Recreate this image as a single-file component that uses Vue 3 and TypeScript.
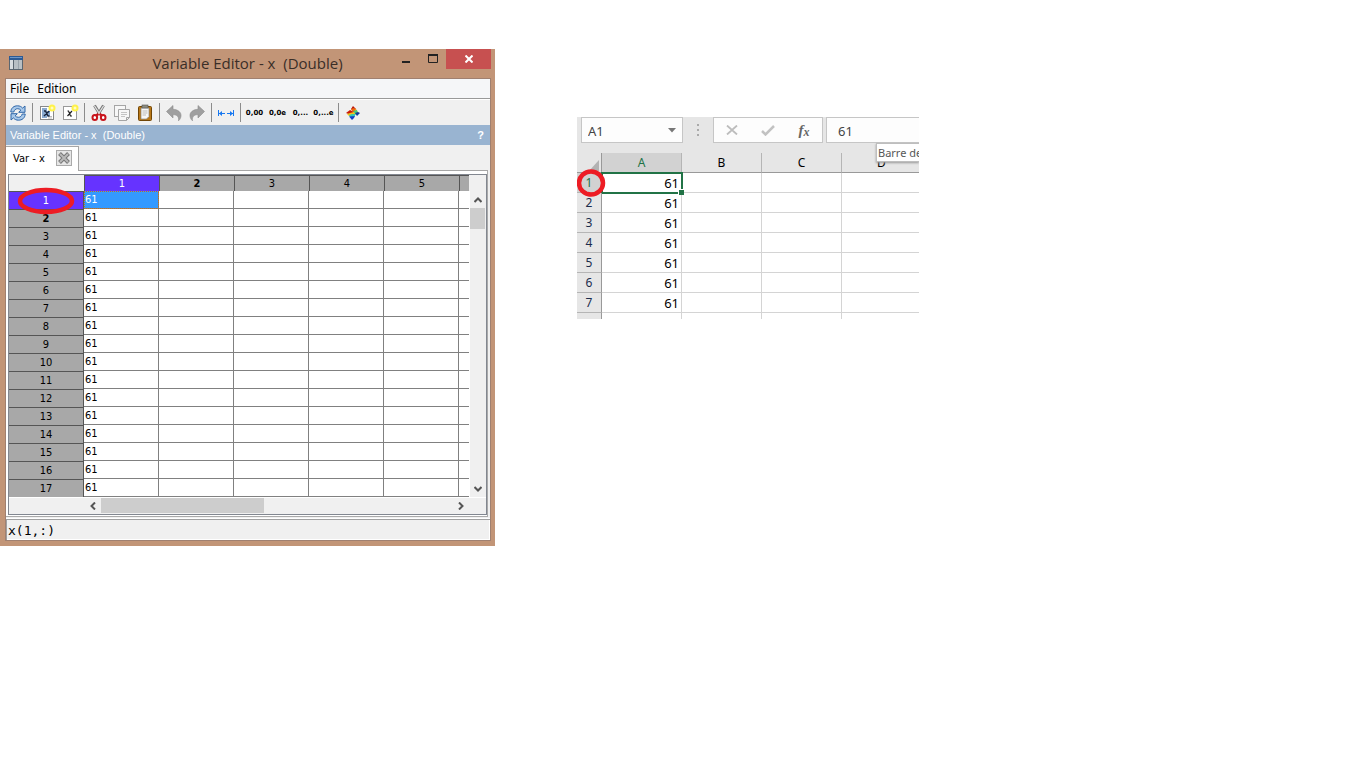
<script setup lang="ts">
import { ref } from 'vue'

const title = 'Variable Editor - x  (Double)'
const editorColumns: number[] = [1, 2, 3, 4, 5, 6]
const editorRows: number[] = Array.from({ length: 17 }, (_, i) => i + 1)
const sheetColumns: string[] = ['A', 'B', 'C', 'D']
const sheetRows: number[] = [1, 2, 3, 4, 5, 6, 7]
const formats: string[] = ['0,00', '0,0e', '0,...', '0,...e']

const value = 61
const selection = ref('x(1,:)')
const cellName = ref('A1')
const formula = ref('61')
</script>

<template>
  <main class="desk">
    <section class="window">
      <header class="titlebar">
        <svg class="app-icon" width="14" height="14" viewBox="0 0 14 14">
          <rect width="14" height="14" fill="#5b6670" />
          <rect width="14" height="4" fill="#2c5a94" />
          <rect x="1" y="1" width="12" height="1" fill="#6d96c8" />
          <rect x="1" y="4" width="3" height="9" fill="#d8dcdf" />
          <rect x="5" y="4" width="8" height="9" fill="#b8bfc4" />
          <rect x="9" y="4" width="1" height="9" fill="#9aa3aa" />
        </svg>
        <h1 class="title">{{ title }}</h1>
        <div class="controls">
          <button class="ctl" aria-label="Minimize">
            <svg width="10" height="10" viewBox="0 0 10 10"><path d="M1 8h8" stroke="#222" stroke-width="2" /></svg>
          </button>
          <button class="ctl" aria-label="Maximize">
            <svg width="10" height="10" viewBox="0 0 10 10"><path d="M.5 1v7.500h9V1" fill="none" stroke="#222" /><path d="M0 1h10" stroke="#222" stroke-width="2" /></svg>
          </button>
          <button class="ctl close" aria-label="Close">
            <svg width="8" height="8" viewBox="0 0 8 8"><path d="M.5 .5l7 7M7.500 .5l-7 7" stroke="#fff" stroke-width="2" /></svg>
          </button>
        </div>
      </header>

      <div class="client">
        <nav class="menubar">
          <button>File</button>
          <button>Edition</button>
        </nav>

        <div class="toolbar">
          <button class="tool" aria-label="Refresh">
            <svg width="16" height="16" viewBox="0 0 16 16" stroke="#2f66a8" stroke-width="1">
              <path d="M.8 7C1 2.800 4 .8 7.500 .8c2.300 0 3.900.9 5.100 2.300L15 1v6.300H8.700l2.100-2.200C10 4.300 9 3.700 7.700 3.700 5.600 3.700 4.200 5 3.800 7z" fill="#a9c9ea" />
              <path d="M15.200 9c-.2 4.200-3.200 6.200-6.700 6.200-2.300 0-3.900-.9-5.100-2.300L1 15V8.700h6.300l-2.100 2.200c.8.8 1.800 1.400 3.100 1.400 2.100 0 3.500-1.300 3.900-3.300z" fill="#a9c9ea" />
            </svg>
          </button>
          <span class="sep"></span>
          <button class="tool" aria-label="New variable from selection">
            <svg width="18" height="18" viewBox="0 0 18 18">
              <rect x="2.500" y="2.500" width="13" height="13" fill="#fff" stroke="#888" />
              <path d="M4 4h5v3h3v5H9v2H4z" fill="#89a9cf" />
              <path d="M11 12.500h3M10 14h4" stroke="#bbb" />
              <path d="M6 7h1.500l2.500 5h1.500M11.300 7L6 12" fill="none" stroke="#17233a" stroke-width="1.300" />
              <circle cx="14" cy="4" r="3.500" fill="#fff24a" /><circle cx="14" cy="4" r="1.500" fill="#fffcc0" />
            </svg>
          </button>
          <button class="tool" aria-label="New variable">
            <svg width="18" height="18" viewBox="0 0 18 18">
              <rect x="2.500" y="2.500" width="13" height="13" fill="#fff" stroke="#999" />
              <path d="M6.500 7h1l2 5h1.500M11 7L6.500 12" fill="none" stroke="#222" stroke-width="1.200" />
              <circle cx="14" cy="4" r="3.500" fill="#fff24a" /><circle cx="14" cy="4" r="1.500" fill="#fffcc0" />
            </svg>
          </button>
          <span class="sep"></span>
          <button class="tool" aria-label="Cut">
            <svg width="18" height="18" viewBox="0 0 18 18">
              <path d="M4.500 1.500L10 10.500M13.500 1.500L8 10.500" stroke="#777" stroke-width="3" />
              <path d="M4.500 2L10 10.500M13.500 2L8 10.500" stroke="#e2e2e2" stroke-width="1.300" />
              <path d="M8.500 10L6 11.500M9.500 10L12 11.500" stroke="#c8141c" stroke-width="2.500" />
              <ellipse cx="4.800" cy="13.500" rx="2.300" ry="2.500" fill="#fff" stroke="#c8141c" stroke-width="2" />
              <ellipse cx="13.200" cy="13.500" rx="2.300" ry="2.500" fill="#fff" stroke="#c8141c" stroke-width="2" />
            </svg>
          </button>
          <button class="tool" aria-label="Copy">
            <svg width="18" height="18" viewBox="0 0 18 18" fill="#f7f7f7" stroke="#a5a5a5">
              <rect x="1.500" y="1.500" width="11" height="11" />
              <path d="M5.500 5.500h11v8l-3 3h-8zM16.500 13.500h-3v3" />
              <path d="M8 8.500h6M8 10.500h6M8 12.500h4" stroke="#c4c4c4" />
            </svg>
          </button>
          <button class="tool" aria-label="Paste">
            <svg width="18" height="18" viewBox="0 0 18 18">
              <rect x="2.500" y="2.500" width="13" height="14" rx="1" fill="#b97818" stroke="#704505" />
              <path d="M5 4h8v8.500L10.500 15H5z" fill="#f8f8f8" stroke="#888" stroke-width=".7" />
              <path d="M6.500 7h5M6.500 9h5M6.500 11h3.500" stroke="#bbb" />
              <rect x="6" y="1" width="6" height="3" fill="#8c8c80" stroke="#555" stroke-width=".6" />
            </svg>
          </button>
          <span class="sep"></span>
          <button class="tool" aria-label="Undo">
            <svg width="18" height="18" viewBox="0 0 18 18">
              <path d="M1.500 7.500L8 1.500v3.800c5 .2 8.300 3 8 6.500-.1 2-1 3.700-2.500 5 .6-4-1.200-6-5.500-6.200v3.400z" fill="#9f9f9f" stroke="#8b8b8b" stroke-width=".6" />
            </svg>
          </button>
          <button class="tool" aria-label="Redo">
            <svg width="18" height="18" viewBox="0 0 18 18">
              <path d="M16.500 7.500L10 1.500v3.800c-5 .2-8.300 3-8 6.500.1 2 1 3.700 2.500 5-.6-4 1.200-6 5.500-6.200v3.400z" fill="#9f9f9f" stroke="#8b8b8b" stroke-width=".6" />
            </svg>
          </button>
          <span class="sep"></span>
          <button class="tool" aria-label="Fit column width">
            <svg width="16" height="8" viewBox="0 0 16 8">
              <path d="M.5 1v6M15.500 1v6M1 4.500h6M9 4.500h6" stroke="#1878f0" />
              <path d="M1 4.500l3-2.500v5zM15 4.500l-3-2.500v5z" fill="#1878f0" />
            </svg>
          </button>
          <span class="sep"></span>
          <button v-for="f in formats" :key="f" class="tool fmt">{{ f }}</button>
          <span class="sep"></span>
          <button class="tool" aria-label="Plot">
            <svg width="14" height="14" viewBox="0 0 14 14">
              <path d="M7 0l3 3-3 2-2-2z" fill="#b81408" />
              <path d="M5 3l3-1 2 1 1 2-4 1z" fill="#ee6a10" />
              <path d="M9 3l2 2 1 1-3 1z" fill="#f4c018" />
              <path d="M7 5l4-1 1 3-3 2z" fill="#48c878" />
              <path d="M9 7l3-1 2 1-3 3z" fill="#123a9c" />
              <path d="M0 7l4-3 4 2-3 3z" fill="#c81808" />
              <path d="M1 8l3-1 4-1 1 2-2 2H3z" fill="#f4c018" />
              <path d="M3 9l3-1 3 0v2l-2 1H4z" fill="#38c8b0" />
              <path d="M3 10.500l6-.5-1 2-2 2z" fill="#1040c8" />
            </svg>
          </button>
        </div>

        <div class="caption">
          <span>{{ title }}</span>
          <button aria-label="Help">?</button>
        </div>

        <div class="tabs">
          <div class="tab">
            <button class="tab-name">Var - x</button>
            <button class="tab-close" aria-label="Close tab">
              <svg width="12" height="12" viewBox="0 0 12 12">
                <path d="M1.500 1.500l9 9M10.500 1.500l-9 9" stroke="#777" stroke-width="4" />
                <path d="M2 2l8 8M10 2l-8 8" stroke="#b8b8b8" stroke-width="2" />
              </svg>
            </button>
          </div>
          <div class="tab-rest"></div>
        </div>

        <div class="panel">
          <div class="grid">
            <div class="grid-view">
              <table class="cells">
                <thead>
                  <tr>
                    <td class="corner"></td>
                    <th v-for="c in editorColumns" :key="c" scope="col" :class="{ on: c === 1, next: c === 2 }">
                      {{ c < 6 ? c : '' }}
                    </th>
                  </tr>
                </thead>
                <tbody>
                  <tr v-for="r in editorRows" :key="r">
                    <th scope="row" :class="{ on: r === 1, next: r === 2 }">
                      {{ r }}
                      <svg v-if="r === 1" class="ring" width="58" height="28" viewBox="0 0 58 28">
                        <ellipse cx="29" cy="14" rx="26" ry="11" fill="none" stroke="#ed1c24" stroke-width="4.500" />
                      </svg>
                    </th>
                    <td v-for="c in editorColumns" :key="c" :class="{ current: r === 1 && c === 1 }">
                      {{ c === 1 ? value : '' }}
                    </td>
                  </tr>
                </tbody>
              </table>
            </div>
            <div class="vscroll">
              <button aria-label="Scroll up">
                <svg width="8" height="6" viewBox="0 0 8 6"><path d="M.5 5L4 1.500 7.500 5" fill="none" stroke="#555" stroke-width="2" /></svg>
              </button>
              <div class="vthumb"></div>
              <button aria-label="Scroll down">
                <svg width="8" height="6" viewBox="0 0 8 6"><path d="M.5 1L4 4.500 7.500 1" fill="none" stroke="#555" stroke-width="2" /></svg>
              </button>
            </div>
            <div class="hscroll">
              <button aria-label="Scroll left">
                <svg width="6" height="8" viewBox="0 0 6 8"><path d="M5 .5L1.500 4 5 7.500" fill="none" stroke="#555" stroke-width="2" /></svg>
              </button>
              <div class="htrack"><div class="hthumb"></div></div>
              <button aria-label="Scroll right">
                <svg width="6" height="8" viewBox="0 0 6 8"><path d="M1 .5L4.500 4 1 7.500" fill="none" stroke="#555" stroke-width="2" /></svg>
              </button>
            </div>
          </div>
        </div>

        <input v-model="selection" class="status" type="text" aria-label="Selection" />
      </div>
    </section>

    <section class="sheet">
      <div class="formula-row">
        <div class="name-box">
          <input v-model="cellName" type="text" aria-label="Name box" />
          <button aria-label="Open name list">
            <svg width="8" height="5" viewBox="0 0 8 5"><path d="M0 0h8L4 4.500z" fill="#777" /></svg>
          </button>
        </div>
        <svg class="dots" width="2" height="12" viewBox="0 0 2 12"><path d="M0 0h2v2H0zM0 5h2v2H0zM0 10h2v2H0z" fill="#aaa" /></svg>
        <div class="actions">
          <button aria-label="Cancel">
            <svg width="12" height="10" viewBox="0 0 12 10"><path d="M1 .5l10 9M11 .5L1 9.500" stroke="#bdbdbd" stroke-width="1.800" /></svg>
          </button>
          <button aria-label="Enter">
            <svg width="14" height="11" viewBox="0 0 14 11"><path d="M1 6l3.500 3.500L13 1" fill="none" stroke="#c2c2c2" stroke-width="2.500" /></svg>
          </button>
          <button class="fx" aria-label="Insert function">f<sub>x</sub></button>
        </div>
        <input v-model="formula" class="formula" type="text" aria-label="Formula" />
        <div class="tip">Barre de</div>
      </div>
      <div class="sheet-view">
        <table class="sheet-cells">
          <thead>
            <tr>
              <td class="all">
                <svg width="10" height="11" viewBox="0 0 10 11"><path d="M10 0v11H0z" fill="#b2b2b2" /></svg>
              </td>
              <th v-for="c in sheetColumns" :key="c" scope="col" :class="{ on: c === 'A' }">{{ c }}</th>
            </tr>
          </thead>
          <tbody>
            <tr v-for="r in sheetRows" :key="r">
              <th scope="row" :class="{ on: r === 1 }">
                {{ r }}
                <svg v-if="r === 1" class="ring sheet-ring" width="30" height="28" viewBox="0 0 30 28">
                  <ellipse cx="15" cy="14" rx="12" ry="11.500" fill="none" stroke="#ed1c24" stroke-width="4.500" />
                </svg>
              </th>
              <td v-for="c in sheetColumns" :key="c" :class="{ current: r === 1 && c === 'A' }">
                {{ c === 'A' ? value : '' }}
              </td>
            </tr>
            <tr class="cut">
              <th></th>
              <td v-for="c in sheetColumns" :key="c"></td>
            </tr>
          </tbody>
        </table>
      </div>
    </section>
  </main>
</template>

<style>
body {
  background: #fff;
}
</style>

<style scoped>
.desk {
  display: grid;
  grid-template-columns: 495fr 82fr 342fr 447fr;
  align-items: start;
  padding-top: 49px;
  font-family: "DejaVu Sans Condensed", "DejaVu Sans", sans-serif;
  font-size: 11px;
  color: #000;
}
.desk * {
  box-sizing: border-box;
}
button,
input {
  margin: 0;
  padding: 0;
  border: 0;
  background: none;
  font: inherit;
  color: inherit;
  min-width: 0;
}
svg {
  display: block;
}
.window {
  background: #c29577;
  padding: 0 4px 5px 5px;
}
.titlebar {
  display: grid;
  grid-template-columns: 14px 1fr 99px;
  align-items: center;
  height: 29px;
  padding-left: 4px;
}
.title {
  margin: 0;
  text-align: center;
  white-space: pre;
  font: 400 15px/24px "Open Sans", sans-serif;
  color: #3a2e28;
  padding: 0 0 2px 80px;
}
.app-icon {
  margin-bottom: 2px;
}
.controls {
  display: flex;
  align-self: start;
}
.ctl {
  flex: 0 0 27px;
  height: 20px;
  display: grid;
  place-items: center;
}
.close {
  flex: 0 0 45px;
  background: #c75050;
}
.client {
  border: 1px solid #a08070;
  background: #f0f0f0;
}
.menubar {
  display: flex;
  gap: 8px;
  height: 20px;
  padding-left: 4px;
  background: #f5f6f8;
  border-bottom: 1px solid #999;
  font: 12px/18px "Noto Sans", sans-serif;
}
.menubar button {
  height: 19px;
}
.toolbar {
  display: flex;
  align-items: center;
  height: 26px;
  border-top: 1px solid #fff;
}
.tool {
  flex: 0 0 23px;
  height: 23px;
  display: grid;
  place-items: center;
}
.fmt {
  font: 700 7px/20px "DejaVu Sans", sans-serif;
  white-space: nowrap;
}
.sep {
  flex: 0 0 1px;
  height: 19px;
  margin: 0 2px 0 3px;
  background: #8c8c8c;
}
.caption {
  display: flex;
  justify-content: space-between;
  height: 20px;
  padding: 0 6px 0 4px;
  background: #99b4d1;
  color: #fff;
  font: 11px/20px "Liberation Sans", sans-serif;
  white-space: pre;
}
.caption button {
  font-weight: 700;
}
.tabs {
  display: flex;
  height: 26px;
  padding: 1px 2px 0 0;
}
.tab {
  display: flex;
  align-items: center;
  gap: 11px;
  flex: 0 0 73px;
  padding: 0 0 2px 7px;
  background: #fff;
  border: 1px solid #a6a6a6;
  border-width: 1px 1px 0 0;
}
.tab-close {
  width: 16px;
  height: 16px;
  display: grid;
  place-items: center;
  background: #e6e6e6;
  border: 1px solid #aaa;
}
.tab-name {
  white-space: nowrap;
}
.tab-rest {
  flex: 1;
  border-bottom: 1px solid #a6a6a6;
}
.panel {
  margin-right: 2px;
  padding: 3px 0 1px 2px;
  background: #fff;
  border: 1px solid #aaa;
  border-width: 0 1px 1px 0;
}
.grid {
  display: grid;
  grid-template-columns: minmax(0, 1fr) 17px;
  border: 1px solid #828790;
  background: #f0f0f0;
}
.grid-view {
  overflow: hidden;
  background: #fff;
}
.cells {
  table-layout: fixed;
  width: 525px;
  border-spacing: 0;
  line-height: 16px;
}
.cells td,
.cells th {
  width: 75px;
  height: 18px;
  padding: 0;
  font-weight: 400;
}
.cells td {
  padding-left: 1px;
  border: 1px solid #808080;
  border-width: 0 1px 1px 0;
  text-align: left;
}
.cells th {
  background: #a8a8a8;
  border-top: 1px solid #555;
  text-align: center;
}
.cells thead th,
.cells .corner {
  height: 16px;
  line-height: 15px;
}
.cells thead th {
  border-left: 1px solid #555;
}
.cells .corner {
  background: #f0f0f0;
  border: 0;
}
.cells tbody th {
  position: relative;
  border-right: 1px solid #555;
}
.cells .on {
  background: #6633ff;
  color: #fff;
}
.cells .next {
  font-weight: 700;
}
.cells .current {
  background: #3399ff;
  color: #fff;
  outline: 1px dotted #c07020;
  outline-offset: -1px;
}
.ring {
  position: absolute;
  z-index: 1;
  left: 50%;
  top: 50%;
  transform: translate(-50%, -50%);
}
.vscroll {
  display: flex;
  flex-direction: column;
  margin-top: 16px;
  border-left: 1px solid #fff;
}
.vscroll button {
  display: grid;
  place-items: center;
  flex: 0 0 17px;
  width: 15px;
}
.vthumb {
  flex: 0 0 21px;
  width: 15px;
  background: #cdcdcd;
}
.vscroll button:last-child {
  margin-top: auto;
}
.hscroll {
  grid-column: 1 / -1;
  display: flex;
  height: 17px;
  padding: 0 17px 1px 75px;
  border-top: 1px solid #fff;
}
.hscroll button {
  display: grid;
  place-items: center;
  flex: 0 0 17px;
}
.htrack {
  flex: 1;
}
.hthumb {
  width: 46.500%;
  height: 15px;
  background: #cdcdcd;
}
.status {
  display: block;
  width: 100%;
  height: 21px;
  margin-top: 2px;
  padding-left: 1px;
  border: 1px solid #a0a0a0;
  border-width: 1px 0 0 1px;
  box-shadow: inset -1px -1px 0 #fff, 0 -1px 0 #fff;
  font: 13px/20px "DejaVu Sans Mono", monospace;
}
.sheet {
  grid-column: 3;
  margin-top: 68px;
  background: #e6e6e6;
  font: 12px/20px "Noto Sans", sans-serif;
  overflow: hidden;
}
.formula-row {
  position: relative;
  display: flex;
  height: 36px;
  padding-left: 4px;
  color: #444;
}
.name-box,
.actions,
.formula {
  height: 26px;
  min-width: 0;
  background: #fdfdfd;
  border: 1px solid #c6c6c6;
}
.name-box {
  display: flex;
  flex: 0 0 102px;
}
.name-box input {
  flex: 1;
  padding: 1px 0 0 6px;
  font-size: 13px;
}
.name-box button {
  flex: 0 0 20px;
  display: grid;
  place-items: center;
}
.dots {
  flex: none;
  margin: 7px 14px 0;
}
.actions {
  display: flex;
  flex: 0 0 110px;
  margin-right: 3px;
}
.actions button {
  flex: 1;
  display: grid;
  place-items: center;
}
.actions .fx {
  display: block;
  font: italic 700 15px/22px "Liberation Serif", serif;
  color: #666;
}
.fx sub {
  font-size: 12px;
  line-height: 0;
  vertical-align: -1px;
}
.formula {
  flex: 1;
  padding: 1px 0 0 11px;
  border-right: 0;
  font-size: 13px;
}
.tip {
  position: absolute;
  z-index: 2;
  right: 0;
  top: 26px;
  width: 43px;
  height: 19px;
  padding-left: 1px;
  overflow: hidden;
  white-space: nowrap;
  background: #fff;
  border: 1px solid #bebebe;
  border-right: 0;
  box-shadow: 0 1px 2px #999;
  font-size: 11px;
  line-height: 17px;
  color: #575757;
}
.sheet-view {
  overflow: hidden;
}
.sheet-cells {
  table-layout: fixed;
  width: 345px;
  border-spacing: 0;
}
.sheet-cells th,
.sheet-cells td {
  width: 80px;
  height: 20px;
  padding: 1px 0 0;
  line-height: 18px;
  font-weight: 400;
}
.sheet-cells td {
  padding-right: 2px;
  background: #fff;
  border: 1px solid #d4d4d4;
  border-width: 0 1px 1px 0;
  text-align: right;
  font-size: 13px;
}
.sheet-cells thead th {
  border: 1px solid #999;
  border-width: 0 0 1px;
  border-right: 1px solid #b5b5b5;
}
.sheet-cells .all {
  width: 25px;
  background: #e6e6e6;
  border-color: #999;
}
.all svg {
  margin: 5px 0 0 auto;
}
.sheet-cells tbody th {
  position: relative;
  border: 1px solid #b5b5b5;
  border-width: 0 1px 1px 0;
  border-right-color: #999;
  color: #1b2c4c;
}
.sheet-cells th.on,
.sheet-cells tbody th.on {
  background: #d2d2d2;
  color: #217346;
}
.sheet-ring {
  left: 14px;
}
.sheet-cells .current {
  position: relative;
  outline: 2px solid #217346;
  outline-offset: -1px;
}
.sheet-cells .current::after {
  content: "";
  position: absolute;
  right: -3px;
  bottom: -3px;
  width: 5px;
  height: 5px;
  background: #217346;
  border: 1px solid #fff;
  border-width: 1px 0 0 1px;
  box-sizing: content-box;
}
.sheet-cells .cut th,
.sheet-cells .cut td {
  height: 6px;
  line-height: 0;
  border-bottom: 0;
}
</style>
